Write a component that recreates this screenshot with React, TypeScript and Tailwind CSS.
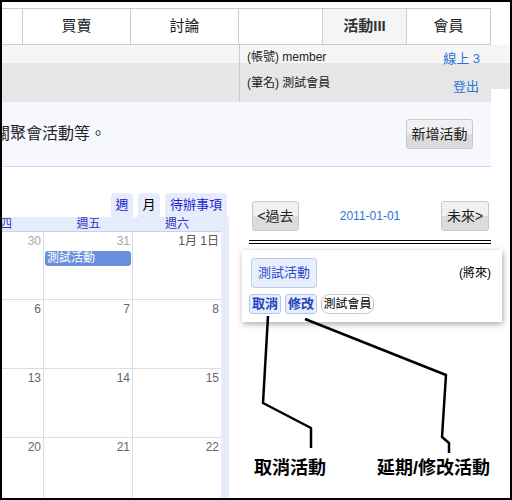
const font = "font-['Liberation_Sans','Noto_Sans_CJK_TC',sans-serif]";

const navCells = [
  { label: "", w: "w-[21px]" },
  { label: "買賣", w: "w-[108px]" },
  { label: "討論", w: "w-[108px]" },
  { label: "", w: "w-[84px]" },
  { label: "活動III", w: "w-[84px]", active: true },
  { label: "會員", w: "w-[84px]" },
];

const weeks = [
  [
    { d: "30", muted: true },
    { d: "31", muted: true, event: "測試活動" },
    { d: "1月 1日", strong: true },
  ],
  [{ d: "6" }, { d: "7" }, { d: "8" }],
  [{ d: "13" }, { d: "14" }, { d: "15" }],
  [{ d: "20" }, { d: "21" }, { d: "22" }],
];

const rowH = ["h-[68px]", "h-[69px]", "h-[69px]", "h-[69px]"];

function GrayButton({ children, className }: { children: React.ReactNode; className: string }) {
  return (
    <button
      className={`flex items-center justify-center whitespace-nowrap rounded-[3px] border border-[#c8c8c8] bg-linear-to-b from-[#f0f0f0] from-50% to-[#dcdcdc] to-50% text-[#222] ${className}`}
    >
      {children}
    </button>
  );
}

function Calendar() {
  return (
    <div className="flex w-[227px] flex-col pt-[26px]">
      <div className="flex h-[24px] justify-end gap-[5px] pr-[2px] text-[13px]">
        <div className="flex w-[22px] items-center justify-center rounded-t-[4px] bg-[#e6ecfb] text-[#1c1cd0]">週</div>
        <div className="flex w-[22px] items-center justify-center rounded-t-[4px] bg-[#e6ecfb] text-black">月</div>
        <div className="flex w-[62px] items-center justify-center rounded-t-[4px] bg-[#e6ecfb] text-[#1c1cd0]">待辦事項</div>
      </div>
      <div className="h-[300px] overflow-hidden bg-[#e6ecfb]">
        <div className="ml-[-46px] w-[265px]">
          <div className="grid h-[15px] grid-cols-[88px_89px_88px] border-b border-[#c5d1f2] text-[12px] leading-[14px] text-[#3434c4]">
            <div className="text-center">週四</div>
            <div className="text-center">週五</div>
            <div className="text-center">週六</div>
          </div>
          {weeks.map((week, r) => (
            <div key={r} className={`grid grid-cols-[88px_89px_88px] bg-white ${rowH[r]}`}>
              {week.map((c, i) => (
                <div
                  key={i}
                  className={`flex flex-col border-b border-[#dddddd] ${i < 2 ? "border-r" : ""}`}
                >
                  <div
                    className={`pr-[2px] pt-[2px] text-right text-[12px] leading-[14px] ${
                      c.muted ? "text-[#aaaaaa]" : c.strong ? "text-[#555]" : "text-[#666]"
                    }`}
                  >
                    {c.d}
                  </div>
                  {c.event && (
                    <div className="mx-[1px] mt-[3px] h-[15px] rounded-[3px] bg-[#6a8fdd] pl-[2px] text-[12px] leading-[15px] text-white">
                      {c.event}
                    </div>
                  )}
                </div>
              ))}
            </div>
          ))}
        </div>
      </div>
    </div>
  );
}

function EventPanel() {
  return (
    <div className="ml-[13px] flex w-[260px] flex-col pt-[34px]">
      <div className="flex h-[30px] items-center justify-between pl-[10px] pr-[13px]">
        <GrayButton className="h-[30px] w-[47px] text-[14px]">&lt;過去</GrayButton>
        <span className="text-[12px] text-[#2b74d6]">2011-01-01</span>
        <GrayButton className="h-[30px] w-[48px] text-[14px]">未來&gt;</GrayButton>
      </div>
      <div className="ml-[7px] mr-[11px] mt-[9px] h-[4px] border-y border-black" />
      <div className="mt-[6px] flex h-[72px] flex-col bg-white px-[7px] pt-[8px] shadow-[1px_2px_6px_rgba(0,0,0,0.35)]">
        <div className="flex items-center justify-between pr-[4px]">
          <div className="ml-[2px] flex h-[30px] w-[66px] items-center justify-center rounded-[3px] border border-[#bccbf0] bg-[#e8eefd] text-[13px] text-[#2a50c8]">
            測試活動
          </div>
          <span className="text-[12px] text-black">(將來)</span>
        </div>
        <div className="mt-[6px] flex h-[20px] gap-[4px]">
          <div className="flex w-[32px] items-center justify-center rounded-[3px] border border-[#b4c6f0] bg-[#e8eefd] text-[13px] font-bold text-[#2244bb]">
            取消
          </div>
          <div className="flex w-[32px] items-center justify-center rounded-[3px] border border-[#b4c6f0] bg-[#e8eefd] text-[13px] font-bold text-[#2244bb]">
            修改
          </div>
          <div className="flex w-[53px] items-center justify-center whitespace-nowrap rounded-[8px] border border-[#c8c8c8] bg-white text-[12px] text-black">
            測試會員
          </div>
        </div>
      </div>
      <div className="mt-[135px] flex text-[18px] font-bold leading-[22px] text-black">
        <span className="ml-[12px]">取消活動</span>
        <span className="ml-[51px]">延期/修改活動</span>
      </div>
    </div>
  );
}

export default function App() {
  return (
    <div className={`relative h-[500px] w-[512px] overflow-hidden border-2 border-black bg-white ${font}`}>
      <div className="h-[6px]" />
      <nav className="flex h-[37px] w-[489px] border-y border-[#cccccc]">
        {navCells.map((c, i) => (
          <div
            key={i}
            className={`flex items-center justify-center border-r border-[#cccccc] text-[15px] text-[#222] ${c.w} ${
              c.active ? "bg-[#f5f5f5] font-bold text-[#333]" : ""
            }`}
          >
            {c.label}
          </div>
        ))}
      </nav>

      <div className="flex h-[57px]">
        <div className="flex w-[237px] flex-col">
          <div className="h-[18px] bg-[#f6f6f6]" />
          <div className="flex-1 bg-[#e6e6e6]" />
        </div>
        <div className="flex w-[252px] flex-col border-l border-[#cccccc] text-[12px] text-[#222]">
          <div className="relative z-10 flex h-[18px] items-end justify-between bg-[#f6f6f6] pl-[7px] pr-[11px]">
            <span className="mb-[-1px] leading-[14px]">(帳號) member</span>
            <span className="mb-[-3px] text-[13px] leading-[14px] text-[#2b74d6]">線上 3</span>
          </div>
          <div className="flex flex-1 items-start justify-between bg-[#e6e6e6] pl-[7px] pr-[12px] pt-[13px]">
            <span className="leading-[14px]">(筆名) 測試會員</span>
            <span className="mt-[4px] text-[13px] leading-[14px] text-[#2b74d6]">登出</span>
          </div>
        </div>
        <div className="flex w-[19px] flex-col">
          <div className="h-[18px] bg-[#f6f6f6]" />
          <div className="h-[26px] bg-[#e6e6e6]" />
        </div>
      </div>

      <div className="flex h-[65px] w-[489px] items-center justify-between overflow-hidden border-b border-[#c8d8f8] bg-[#f7f8fe]">
        <span className="ml-[-8px] whitespace-nowrap text-[16px] text-[#222]">關聚會活動等。</span>
        <GrayButton className="mr-[18px] h-[30px] w-[67px] text-[14px]">新增活動</GrayButton>
      </div>

      <div className="flex">
        <Calendar />
        <EventPanel />
      </div>

      <svg
        className="pointer-events-none absolute left-[-2px] top-[-2px]"
        width="512"
        height="500"
        viewBox="0 0 512 500"
      >
        <polyline
          points="268,316 263,403 311,428 311,448"
          fill="none"
          stroke="black"
          strokeWidth="2.5"
          strokeLinejoin="round"
        />
        <polyline
          points="305,319 446,375 442,437 449,443 449,453"
          fill="none"
          stroke="black"
          strokeWidth="2.5"
          strokeLinejoin="round"
        />
      </svg>
    </div>
  );
}
